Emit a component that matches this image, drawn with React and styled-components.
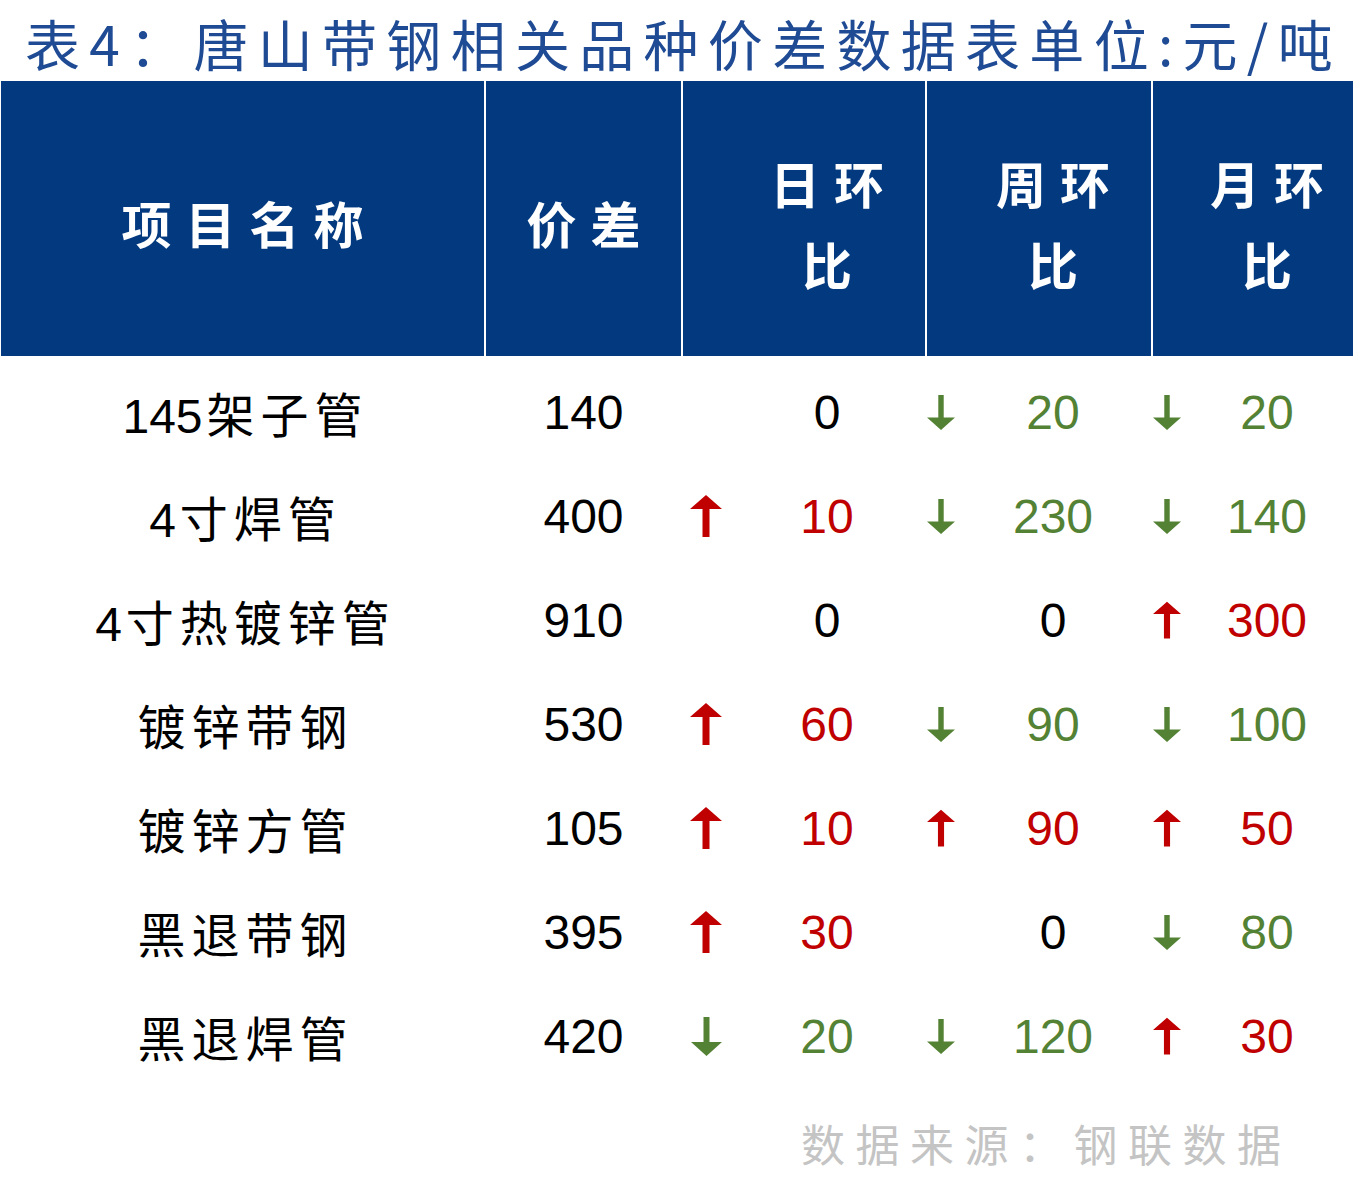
import React from 'react';
import styled, { createGlobalStyle } from 'styled-components';

const GlobalStyle = createGlobalStyle`
  html, body {
    margin: 0;
    padding: 0;
    background: #ffffff;
  }
  body {
    font-family: "Liberation Sans", "Noto Sans CJK SC", sans-serif;
  }
`;

const NAVY = '#02397f';
const RED = '#c00000';
const GREEN = '#548235';

// arrow slot width for each change column (日, 周, 月)
const SLOTS = [46, 28, 28];

const rows = [
    { num: '145', name: '架子管', price: 140, d: [0, 0], w: [-1, 20], m: [-1, 20] },
    { num: '4', name: '寸焊管', price: 400, d: [1, 10], w: [-1, 230], m: [-1, 140] },
    { num: '4', name: '寸热镀锌管', price: 910, d: [0, 0], w: [0, 0], m: [1, 300] },
    { num: '', name: '镀锌带钢', price: 530, d: [1, 60], w: [-1, 90], m: [-1, 100] },
    { num: '', name: '镀锌方管', price: 105, d: [1, 10], w: [1, 90], m: [1, 50] },
    { num: '', name: '黑退带钢', price: 395, d: [1, 30], w: [0, 0], m: [-1, 80] },
    { num: '', name: '黑退焊管', price: 420, d: [-1, 20], w: [-1, 120], m: [1, 30] },
];

function Arrow({ dir }) {
    if (dir > 0) {
        return (
            <svg width="32" height="42" viewBox="0 0 32 42">
                <polygon points="16,0 32,14 19.5,14 19.5,42 12.5,42 12.5,14 0,14" fill={RED} />
            </svg>
        );
    }
    return (
        <svg width="31" height="39" viewBox="0 0 31 39">
            <polygon points="12.5,0 18.5,0 18.5,25 31,25 15.5,39 0,25 12.5,25" fill={GREEN} />
        </svg>
    );
}

function App() {
    return (
        <Page>
            <GlobalStyle />
            <Title>表4：唐山带钢相关品种价差数据表单位:元/吨</Title>
            <Table>
                <HeadRow>
                    <HeadCell>
                        <HeadText>项目名称</HeadText>
                    </HeadCell>
                    <HeadCell>
                        <HeadText>价差</HeadText>
                    </HeadCell>
                    {['日', '周', '月'].map((p, i) => (
                        <HeadCell key={p} $slot={SLOTS[i]}>
                            <span />
                            <HeadText>
                                {p}环<br />比
                            </HeadText>
                        </HeadCell>
                    ))}
                </HeadRow>
                <Body>
                    {rows.map((r) => (
                        <Row key={r.num + r.name}>
                            <NameCell>
                                {r.num && <Num>{r.num}</Num>}
                                {r.name}
                            </NameCell>
                            <PriceCell>{r.price}</PriceCell>
                            {[r.d, r.w, r.m].map(([dir, val], i) => (
                                <ChangeCell key={i} $slot={SLOTS[i]}>
                                    <ArrowSlot>{dir !== 0 && <Arrow dir={dir} />}</ArrowSlot>
                                    <Value $dir={dir}>{dir === 0 ? 0 : val}</Value>
                                </ChangeCell>
                            ))}
                        </Row>
                    ))}
                </Body>
            </Table>
            <Source>数据来源：钢联数据</Source>
        </Page>
    );
}

export default App;

const Page = styled.div`
    width: 1355px;
    height: 1192px;
    overflow: hidden;
    background: #ffffff;
`;

const Title = styled.div`
    height: 81px;
    padding-left: 25px;
    font-family: "Noto Sans CJK SC", sans-serif;
    font-size: 55px;
    line-height: 84px;
    letter-spacing: 9.3px;
    color: #1f4a94;
    white-space: nowrap;
`;

const Table = styled.div`
    margin-left: 1px;
    width: 1352px;
`;

const COLS = '483px 195px 242px 224px 200px';

const HeadRow = styled.div`
    display: grid;
    grid-template-columns: ${COLS};
    column-gap: 2px;
    height: 275px;
`;

const HeadCell = styled.div`
    background: ${NAVY};
    display: grid;
    grid-template-columns: ${(p) => (p.$slot ? `${p.$slot}px 1fr` : '1fr')};
    align-items: center;
    justify-items: center;
    padding-top: 8px;
`;

const HeadText = styled.div`
    font-family: "Noto Sans CJK SC", sans-serif;
    font-weight: 700;
    font-size: 50px;
    line-height: 81px;
    letter-spacing: 14px;
    padding-left: 14px;
    color: #ffffff;
    text-align: center;
`;

const Body = styled.div`
    padding-top: 4px;
`;

const Row = styled.div`
    display: grid;
    grid-template-columns: ${COLS};
    column-gap: 2px;
    height: 104px;
    align-items: center;
`;

const NameCell = styled.div`
    text-align: center;
    font-size: 48px;
    letter-spacing: 6px;
    padding-left: 6px;
    color: #000000;
`;

const Num = styled.span`
    letter-spacing: 0;
    margin-right: 4px;
`;

const PriceCell = styled.div`
    text-align: center;
    font-size: 48px;
    color: #000000;
`;

const ChangeCell = styled.div`
    display: grid;
    grid-template-columns: ${(p) => p.$slot}px 1fr;
    align-items: center;
`;

const ArrowSlot = styled.div`
    display: flex;
    justify-content: center;
    align-items: center;
    height: 44px;
`;

const Value = styled.div`
    text-align: center;
    font-size: 48px;
    color: ${(p) => (p.$dir > 0 ? RED : p.$dir < 0 ? GREEN : '#000000')};
`;

const Source = styled.div`
    margin-top: 30px;
    padding-left: 801px;
    font-family: "Noto Sans CJK SC", sans-serif;
    font-size: 44px;
    line-height: 50px;
    letter-spacing: 10.5px;
    color: #c4c4c4;
    white-space: nowrap;
`;
